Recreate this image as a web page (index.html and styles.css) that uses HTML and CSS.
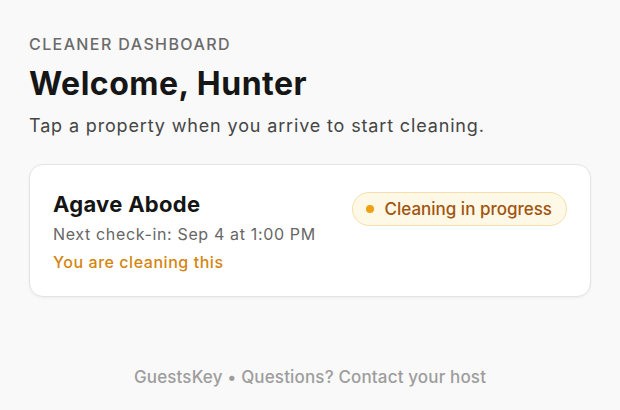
FILE: index.html
```html
<!DOCTYPE html>
<html>
<head>
<meta charset="utf-8">
<link rel="stylesheet" href="styles.css">
</head>
<body>
<main class="page">
  <div class="eyebrow">CLEANER DASHBOARD</div>
  <h1 class="title">Welcome, Hunter</h1>
  <p class="subtitle">Tap a property when you arrive to start cleaning.</p>
  <section class="card">
    <div class="card-info">
      <h2 class="prop-name">Agave Abode</h2>
      <div class="checkin">Next check-in: Sep 4 at 1:00 PM</div>
      <div class="status-note">You are cleaning this</div>
    </div>
    <div class="badge"><span class="dot"></span>Cleaning in progress</div>
  </section>
  <footer class="footer">GuestsKey • Questions? Contact your host</footer>
</main>
</body>
</html>
```
FILE: styles.css
```css
html, body {
  margin: 0;
  padding: 0;
  background: #f9f9f9;
}
body {
  font-family: Inter, "Noto Sans", sans-serif;
  color: #1a1a1a;
  width: 620px;
  height: 410px;
  overflow: hidden;
}
.page {
  padding: 35px 29px 0 29px;
  display: flex;
  flex-direction: column;
}
.eyebrow {
  font-size: 16px;
  font-weight: 500;
  letter-spacing: 1.4px;
  color: #6b6b6b;
  line-height: 18px;
}
.title {
  margin: 12px 0 0 0;
  font-size: 32px;
  font-weight: 700;
  letter-spacing: 0.5px;
  line-height: 37px;
  color: #161616;
}
.subtitle {
  margin: 13px 0 0 0;
  font-size: 18px;
  letter-spacing: 0.85px;
  line-height: 22px;
  color: #454545;
}
.card {
  margin-top: 27px;
  background: #fff;
  border: 1px solid #e4e4e4;
  border-radius: 14px;
  box-shadow: 0 1px 3px rgba(0,0,0,0.05);
  padding: 26px 23px 24px 23px;
  display: flex;
  justify-content: space-between;
  align-items: flex-start;
}
.prop-name {
  margin: 0;
  font-size: 22px;
  font-weight: 700;
  letter-spacing: 0.3px;
  line-height: 26px;
  color: #151515;
}
.checkin {
  margin-top: 7px;
  font-size: 16px;
  letter-spacing: 0.65px;
  line-height: 20px;
  color: #666;
}
.status-note {
  margin-top: 8px;
  font-size: 16px;
  letter-spacing: 0.55px;
  line-height: 20px;
  color: #d4850f;
  font-weight: 500;
}
.badge {
  margin-top: 1px;
  display: flex;
  align-items: center;
  gap: 10px;
  height: 32px;
  padding: 0 14px 0 13px;
  border: 1px solid #f6dfa8;
  background: #fef8e6;
  border-radius: 17px;
  color: #a25410;
  font-size: 17px;
  letter-spacing: 0;
  font-weight: 500;
}
.dot {
  width: 8px;
  height: 8px;
  border-radius: 50%;
  background: #f0a010;
}
.footer {
  margin-top: 70px;
  text-align: center;
  font-size: 17px;
  letter-spacing: 0.15px;
  color: #9d9d9d;
  font-weight: 500;
}
```
